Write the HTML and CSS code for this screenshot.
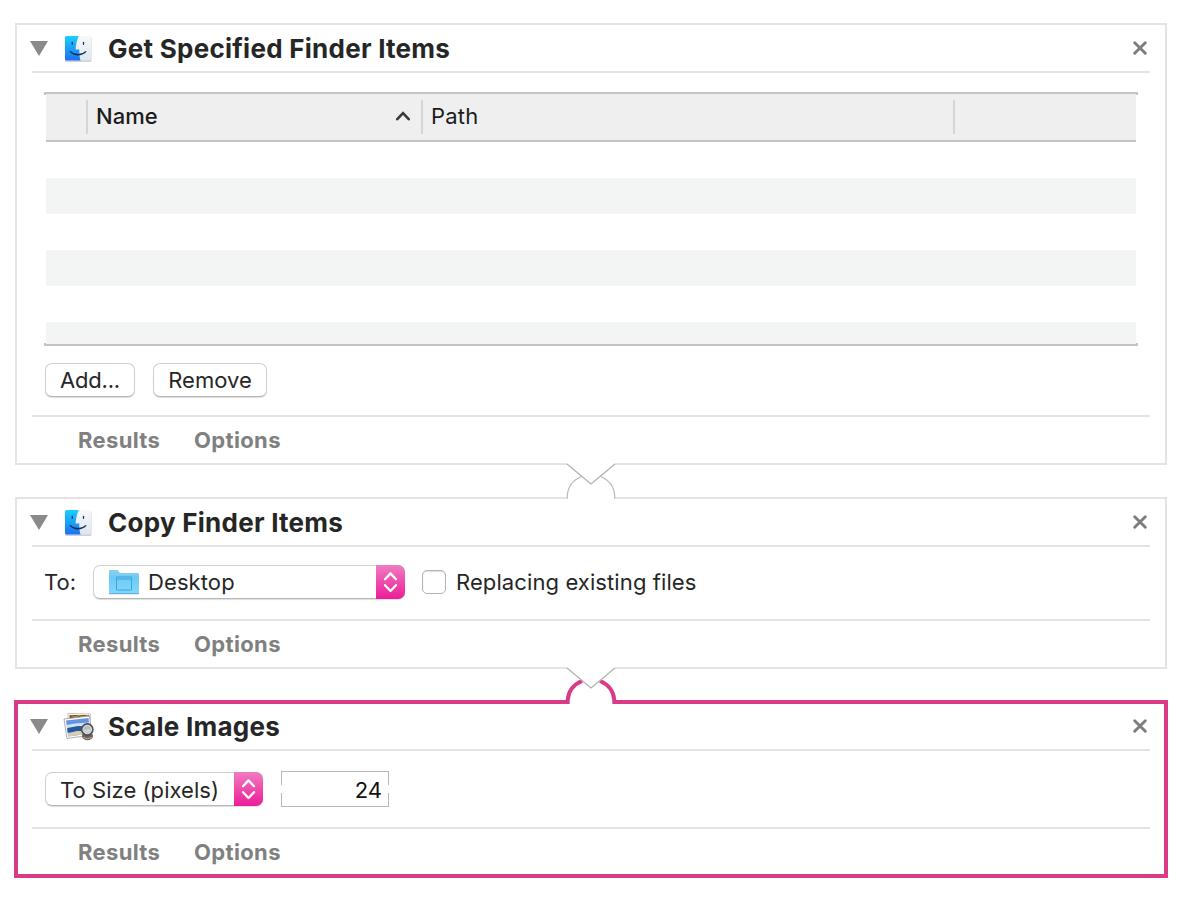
FILE: index.html
```html
<!DOCTYPE html>
<html lang="en">
<head>
<meta charset="utf-8">
<title>Workflow</title>
<link rel="stylesheet" href="styles.css">
</head>
<body>
<svg class="defs" width="0" height="0" aria-hidden="true">
  <defs>
    <linearGradient id="blue" x1="0" y1="0" x2="0" y2="1"><stop offset="0" stop-color="#19d0fd"/><stop offset="1" stop-color="#1e6ff3"/></linearGradient>
    <linearGradient id="pale" x1="0" y1="0" x2="0" y2="1"><stop offset="0" stop-color="#f8f8f9"/><stop offset="1" stop-color="#dce6f3"/></linearGradient>
    <linearGradient id="folder" x1="0" y1="0" x2="0" y2="1"><stop offset="0" stop-color="#6ac9f6"/><stop offset="1" stop-color="#83d7fb"/></linearGradient>
    <symbol id="finder" viewBox="0 0 30 28">
      <rect x="1" y="2" width="26.500" height="25" rx="1.500" fill="#000" opacity=".18"/>
      <rect x="1" y="1" width="26" height="24.500" rx="1.500" fill="url(#pale)"/>
      <path d="M2.500 1H14.700C12.700 5.500 11.900 10 11.600 14.500H15.300C15.200 18.500 15.500 22 16.500 25.500H2.500Q1 25.500 1 24V2.500Q1 1 2.500 1Z" fill="url(#blue)"/>
      <path d="M8.300 7.300V9.300M19.500 7.300V9.300" stroke="#183047" stroke-width="1.300" stroke-linecap="round"/>
      <path d="M6.300 16.600C10.500 20.800 17.500 20.800 21.800 16.600" fill="none" stroke="#183047" stroke-width="1.300" stroke-linecap="round"/>
    </symbol>
    <symbol id="close" viewBox="0 0 14 14"><path d="M1.700 1.700L12.300 12.300M12.300 1.700L1.700 12.300" stroke="#7d7d7d" stroke-width="2.900" stroke-linecap="round"/></symbol>
    <symbol id="arrows" viewBox="0 0 29 34"><path d="M9 14.200L14.500 8.400L20 14.200M9 20.200L14.500 26L20 20.200" fill="none" stroke="#fff" stroke-width="2.300" stroke-linecap="round" stroke-linejoin="round"/></symbol>
  </defs>
</svg>
<main class="workflow">
  <section class="card">
    <header class="head"><i class="disclosure"></i><svg class="app-icon"><use href="#finder"/></svg><h2 class="title t-get">Get Specified Finder Items</h2><svg class="close"><use href="#close"/></svg></header>
    <div class="content files">
      <div class="table">
        <div class="columns">
          <span class="col c-icon"></span>
          <span class="col c-name"><span>Name</span><svg class="sort" viewBox="0 0 16 10"><path d="M2.300 8.200L8 2.200L13.700 8.200" fill="none" stroke="#3a3a3a" stroke-width="2.600" stroke-linecap="round"/></svg></span>
          <span class="col c-path">Path</span>
        </div>
        <div class="row"></div><div class="row odd"></div><div class="row"></div><div class="row odd"></div><div class="row"></div><div class="row odd last"></div>
      </div>
      <div class="buttons"><button class="btn add">Add...</button><button class="btn remove">Remove</button></div>
    </div>
    <footer class="foot"><span class="results">Results</span><span class="options">Options</span></footer>
  </section>
  <section class="card second">
    <svg class="link" viewBox="0 0 60 44"><path d="M6.500 6H53.500V41H6.500Z" fill="#fff"/><path d="M6.300 39.500V36.500C7 27 12 21 20.500 17.500M53.700 39.500V36.500C53 27 48 21 39.500 17.500" fill="none" stroke="#b9b9b9" stroke-width="1.200"/><path d="M6 3H54V5L30 25L6 5Z" fill="#fff"/><path d="M6 5L30 25L54 5" fill="none" stroke="#b0b0b0" stroke-width="1.200"/></svg>
    <header class="head"><i class="disclosure"></i><svg class="app-icon"><use href="#finder"/></svg><h2 class="title t-copy">Copy Finder Items</h2><svg class="close"><use href="#close"/></svg></header>
    <div class="content copy">
      <span class="to">To:</span>
      <div class="popup p-dest"><svg class="folder" viewBox="0 0 32 26"><path d="M1 25V2Q1 1 2 1H9.500L12 4H30Q31 4 31 5V25Z" fill="#83cdf1"/><path d="M1 6.500H31V24Q31 25 30 25H2Q1 25 1 24Z" fill="url(#folder)"/><path d="M1 24.700H31" stroke="#5aa9d2"/><path d="M8.500 8H23.500V21H8.500ZM9 10H23" fill="none" stroke="#3da5d9"/></svg><span class="value">Desktop</span><span class="stepper"><svg><use href="#arrows"/></svg></span></div>
      <span class="check"></span><span class="check-label">Replacing existing files</span>
    </div>
    <footer class="foot"><span class="results">Results</span><span class="options">Options</span></footer>
  </section>
  <section class="card selected">
    <svg class="link" viewBox="0 0 60 44"><path d="M6 6H54V41H6Z" fill="#fff"/><path d="M6.700 41V37C7.500 27.500 12.500 21.500 21 18M53.300 41V37C52.500 27.500 47.500 21.500 39 18" fill="none" stroke="#da3b86" stroke-width="4"/><path d="M6 3H54V5L30 25L6 5Z" fill="#fff"/><path d="M6 5L30 25L54 5" fill="none" stroke="#b0b0b0" stroke-width="1.200"/></svg>
    <header class="head"><i class="disclosure"></i>
      <svg class="app-icon photo" viewBox="0 0 32 30">
        <path d="M5 1.500L27.500 2L27 20L5 20Z" fill="#fff" stroke="#aaa" stroke-width=".7"/><path d="M6.500 3H26V10H6.500Z" fill="#795021"/><path d="M8 3.500L12 5L16 3.500L20 5L25 3.500" stroke="#c89b4c" fill="none"/>
        <path d="M1 7L26.500 4L28.500 23L4 26.500Z" fill="#fff" stroke="#999" stroke-width=".8"/>
        <path d="M3 8.500L25.500 6L27 21.500L5.300 24.500Z" fill="#6494e4"/><path d="M3.500 13L12 11.500L26 10.500L26.300 14L4.200 17Z" fill="#cfe2f8"/><path d="M4.200 16L15 14L26.400 14.500L26.800 18L4.700 20.500Z" fill="#245a9d"/><path d="M4.700 21.500L14 19L27 19V21.500L5.300 24.500Z" fill="#d9ccb1"/>
        <ellipse cx="24.500" cy="24" rx="5.500" ry="4.300" fill="#6d6259"/><path d="M20 25.500Q24.500 28 29 25.500" fill="none" stroke="#b9ada0"/><circle cx="24.300" cy="17.500" r="5.500" fill="#aebfcd" stroke="#4b4d50" stroke-width="1.800"/><path d="M20.500 18L28 16.500L26.500 20.500L22.500 21Z" fill="#d8cfbd"/><circle cx="24.300" cy="17.500" r="4.300" fill="none" stroke="#e6e6e6" stroke-width=".9"/>
      </svg>
      <h2 class="title t-scale">Scale Images</h2><svg class="close"><use href="#close"/></svg></header>
    <div class="content scale">
      <div class="popup p-size"><span class="value">To Size (pixels)</span><span class="stepper"><svg><use href="#arrows"/></svg></span></div>
      <div class="field">24</div>
    </div>
    <footer class="foot"><span class="results">Results</span><span class="options">Options</span></footer>
  </section>
</main>
</body>
</html>
```
FILE: styles.css
```css
* { box-sizing: border-box; }
body { margin: 0; background: #fff; color: #262626; font: 400 22px/30px Inter, "Liberation Sans", sans-serif; }
svg { display: block; flex: none; }
.defs { position: absolute; }
.workflow { width: 1182px; height: 900px; padding: 23px 15px 0; overflow: hidden; display: flex; flex-direction: column; }
.card { position: relative; border: 2px solid #e4e4e4; padding: 0 15px; height: 442px; display: flex; flex-direction: column; flex: none; }
.card.second { margin-top: 32px; height: 172px; }
.card.selected { margin: 31px -1px 0; height: 178px; border: 4px solid #da3b86; padding: 0 14px; }
.link { position: absolute; width: 60px; height: 44px; left: 544px; top: -40px; }
.selected .link { left: 543px; top: -41px; }
.head { height: 48px; border-bottom: 2px solid #e4e4e4; display: flex; align-items: center; flex: none; }
.selected .head { height: 47px; }
.disclosure { border: 9px solid transparent; border-top: 15px solid #8a8a8a; border-bottom: 0; margin-left: -2px; }
.app-icon { width: 30px; height: 28px; margin: 2px 0 0 16px; }
.photo { width: 32px; height: 30px; margin: 0 0 0 15px; }
.title { margin: 0 auto 0 14px; padding-top: 2px; font-size: 26px; font-weight: 700; line-height: 30px; letter-spacing: .26px; white-space: nowrap; }
.t-scale { margin-left: 13px; padding-top: 0; }
.close { width: 14px; height: 14px; margin-right: 3px; }
.selected .close { margin-bottom: 1px; }
.content { flex: 1; min-height: 0; padding: 0 12px; }
.files { padding-top: 19px; }
.table { height: 254px; position: relative; border: solid #c4c4c4; border-width: 2px 0; padding: 0 2px; }
.table::before, .table::after { content: ""; position: absolute; left: 0; right: 0; height: 1px; border: solid #c4c4c4; border-width: 0 2px; }
.table::before { top: 0; }
.table::after { bottom: 0; }
.columns { height: 48px; background: #efefef; border-bottom: 2px solid #c4c4c4; display: flex; align-items: center; color: #1c1c1c; }
.col { height: 34px; border-right: 2px solid #d5d5d5; display: flex; align-items: center; line-height: 32px; padding-bottom: 2px; }
.c-icon { width: 42px; }
.c-name { width: 335px; padding: 0 10px 2px 8px; justify-content: space-between; font-weight: 500; }
.c-path { width: 532px; padding-left: 8px; letter-spacing: .2px; }
.sort { width: 16px; height: 10px; }
.row { height: 36px; }
.row.odd { background: #f3f5f5; }
.row.last { height: 22px; }
.buttons { display: flex; gap: 18px; padding: 17px 1px 0; }
.btn { height: 34px; padding: 0; font: inherit; color: inherit; background: #fff; border: 1px solid #d0d0d0; border-bottom-color: #b6b6b6; border-radius: 7px; box-shadow: 0 1px 1px #0002; }
.add { width: 90px; letter-spacing: -.2px; }
.remove { width: 114px; }
.foot { height: 48px; border-top: 2px solid #e4e4e4; display: flex; align-items: center; padding-left: 46px; color: #808080; font-weight: 700; letter-spacing: .35px; flex: none; }
.selected .foot { height: 47px; }
.results { width: 116px; }
.copy, .scale { display: flex; align-items: center; }
.copy { padding-bottom: 2px; }
.to { width: 49px; }
.popup { height: 34px; display: flex; align-items: center; border-radius: 7px; border: 1px solid #d0d0d0; border-bottom-color: #b6b6b6; box-shadow: 0 1px 1px #0002; white-space: nowrap; }
.p-dest { width: 312px; padding-left: 14px; }
.p-size { width: 218px; margin-left: 1px; padding-left: 14px; }
.p-size .value { padding-top: 2px; letter-spacing: .05px; }
.stepper { width: 29px; height: 34px; margin: -1px -1px -1px auto; background: linear-gradient(#f07cc0, #ec1c98); border-radius: 0 7px 7px 0; }
.stepper svg { width: 29px; height: 34px; }
.folder { width: 32px; height: 26px; margin-right: 8px; }
.p-dest .value { letter-spacing: .1px; }
.check { width: 24px; height: 24px; margin: 0 10px 0 17px; border: 1px solid #b3b3b3; border-radius: 5px; box-shadow: inset 0 1px 1px #0002; }
.check-label { letter-spacing: .1px; }
.field { position: relative; width: 108px; height: 36px; margin-left: 18px; padding-right: 6px; border: 1px solid #b8b8b8; text-align: right; line-height: 37px; color: #111; }
.field::before { content: ""; position: absolute; left: -1px; right: -1px; top: 13px; height: 8px; border: solid #fff; border-width: 0 1px; }
```
